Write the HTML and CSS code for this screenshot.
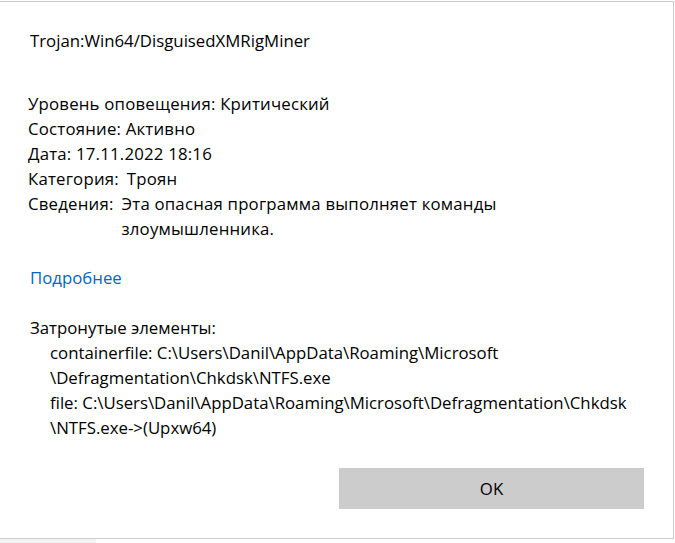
FILE: index.html
```html
<!DOCTYPE html>
<html lang="ru">
  <head>
    <meta charset="UTF-8" />
    <meta name="viewport" content="width=device-width, initial-scale=1.0" />
    <title>Защитник Windows</title>
    <link rel="stylesheet" href="styles.css">
  </head>
  <body>
    <div class="dialog">
      <div class="content">
        <h1 class="threat-name">Trojan:Win64/DisguisedXMRigMiner</h1>
        <div class="details">
          <p>Уровень оповещения: Критический</p>
          <p>Состояние: Активно</p>
          <p>Дата: 17.11.2022 18:16</p>
          <p class="row"><span class="label">Категория:</span> <span>Троян</span></p>
          <p class="row">
            <span class="label">Сведения:</span>
            <span class="value">Эта опасная программа выполняет команды злоумышленника.</span>
          </p>
        </div>
        <a class="more-link" href="#">Подробнее</a>
        <div class="affected">
          <p>Затронутые элементы:</p>
          <ul class="items">
            <li>containerfile: C:\Users\Danil\AppData\Roaming\Microsoft<br>\Defragmentation\Chkdsk\NTFS.exe</li>
            <li>file: C:\Users\Danil\AppData\Roaming\Microsoft\Defragmentation\Chkdsk<br>\NTFS.exe-&gt;(Upxw64)</li>
          </ul>
        </div>
      </div>
      <div class="actions">
        <button type="button" class="ok-btn">OK</button>
      </div>
    </div>
    <div class="taskbar-strip"><div class="strip-left"></div></div>
  </body>
</html>
```

FILE: styles.css
```css
body {
  margin: 0;
  background-color: #ffffff;
  font-family: "Open Sans", "Noto Sans", sans-serif;
  font-size: 16.8px;
  color: #000000;
}
.dialog {
  margin-top: 1px;
  width: 673px;
  height: 536px;
  background-color: #ffffff;
  border-top: 1px solid #cccccc;
  border-right: 1px solid #cccccc;
  border-bottom: 1px solid #cccccc;
  display: flex;
  flex-direction: column;
}
.content {
  padding: 26px 0 0 30px;
  flex: 1;
}
.threat-name {
  margin: 0;
  font-size: 16.8px;
  font-weight: normal;
  line-height: 25px;
}
.details {
  margin-top: 38px;
  margin-left: -2px;
  letter-spacing: 0.2px;
}
.details p,
.affected p {
  margin: 0;
  line-height: 25px;
}
.row {
  display: flex;
  gap: 8px;
}
.value {
  width: 440px;
}
.more-link {
  display: block;
  margin-top: 24px;
  line-height: 25px;
  color: #0067c0;
  text-decoration: none;
}
.affected {
  margin-top: 25px;
}
.items {
  list-style: none;
  margin: 0;
  padding: 0 0 0 20px;
}
.items li {
  line-height: 25px;
}
.actions {
  display: flex;
  justify-content: flex-end;
  padding: 0 29px 29px 0;
}
.ok-btn {
  width: 305px;
  height: 41px;
  border: none;
  border-radius: 0;
  background-color: #cccccc;
  font-family: inherit;
  font-size: 16.8px;
  color: #000000;
}
.taskbar-strip {
  height: 4px;
  background-color: #ffffff;
}
.strip-left {
  width: 96px;
  height: 4px;
  background-color: #f3f3f3;
}
```
